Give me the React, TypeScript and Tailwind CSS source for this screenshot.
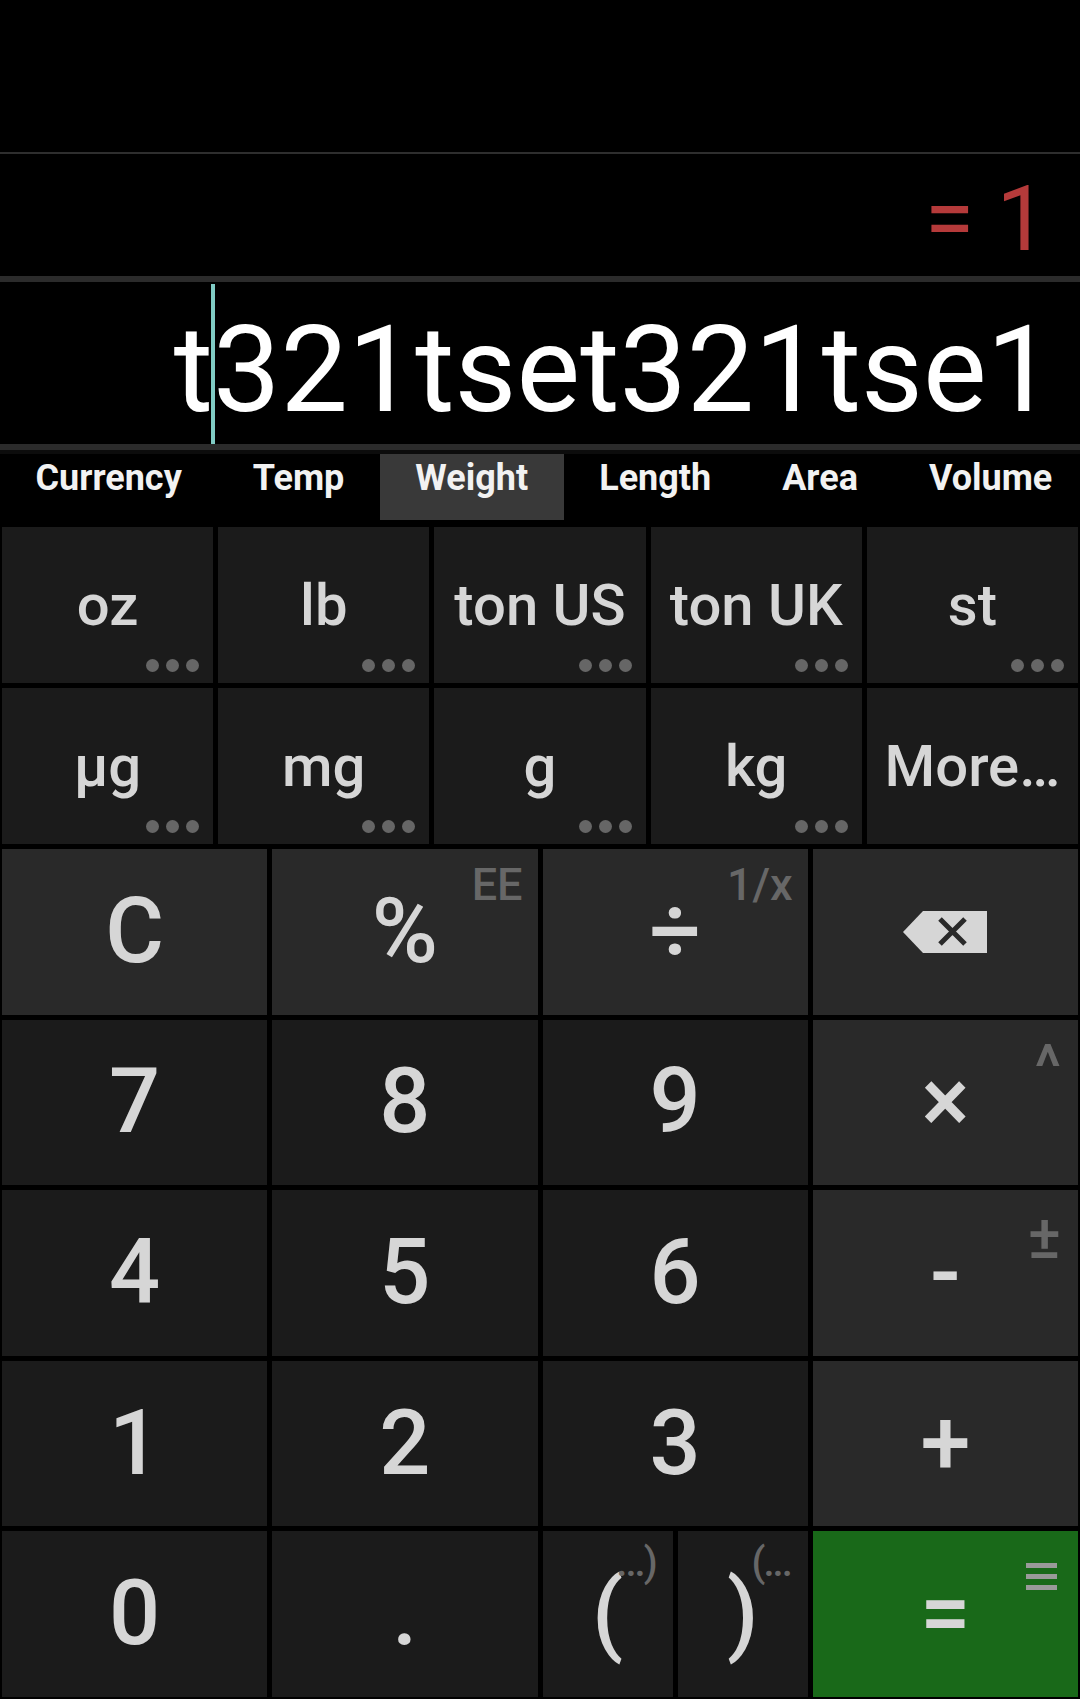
const tabs = ["Currency", "Temp", "Weight", "Length", "Area", "Volume"];

const unitRows = [
  [
    { label: "oz", more: true },
    { label: "lb", more: true },
    { label: "ton US", more: true },
    { label: "ton UK", more: true },
    { label: "st", more: true },
  ],
  [
    { label: "µg", more: true },
    { label: "mg", more: true },
    { label: "g", more: true },
    { label: "kg", more: true },
    { label: "More…", more: false },
  ],
];

function Dots() {
  return (
    <div className="absolute right-[14px] bottom-[11px] flex gap-[7px]">
      <span className="w-[13px] h-[13px] rounded-full bg-[#666666]" />
      <span className="w-[13px] h-[13px] rounded-full bg-[#666666]" />
      <span className="w-[13px] h-[13px] rounded-full bg-[#666666]" />
    </div>
  );
}

interface KeyProps {
  children: React.ReactNode;
  light?: boolean;
  hint?: React.ReactNode;
  hintClass?: string;
  className?: string;
}

function Key({ children, light, hint, hintClass, className }: KeyProps) {
  return (
    <div
      className={`relative flex items-center justify-center text-[90px] font-medium leading-none text-[#d6d6d6] ${
        light ? "bg-[#292929]" : "bg-[#1b1b1b]"
      } ${className ?? ""}`}
    >
      {children}
      {hint && (
        <span className={`absolute leading-none text-[#676767] ${hintClass ?? "top-[13px] right-[15px] text-[45px]"}`}>
          {hint}
        </span>
      )}
    </div>
  );
}

function BackspaceIcon() {
  return (
    <svg width="84" height="42" viewBox="0 0 84 42">
      <path d="M0 21 L20 0 H84 V42 H20 Z" fill="#d6d6d6" />
      <path d="M37 8 L62 33 M62 8 L37 33" stroke="#292929" strokeWidth="5" />
    </svg>
  );
}

function HistoryIcon() {
  return (
    <svg width="31" height="27" viewBox="0 0 31 27">
      <rect x="0" y="0" width="31" height="5" fill="#9a9a9a" />
      <rect x="0" y="11" width="31" height="5" fill="#9a9a9a" />
      <rect x="0" y="22" width="31" height="5" fill="#9a9a9a" />
    </svg>
  );
}

export default function App() {
  return (
    <div className="w-[1080px] h-[1699px] bg-black overflow-hidden font-[family-name:Roboto,sans-serif] flex flex-col">
      <div className="h-[152px] shrink-0" />
      <div className="h-[2px] shrink-0 bg-[#2e2e2e]" />

      {/* result */}
      <div className="h-[122px] shrink-0 flex justify-end items-start pt-[21px] pr-[33px]">
        <span className="text-[90px] leading-none text-[#b53a3a]">= 1</span>
      </div>
      <div className="h-[6px] shrink-0 bg-[#2b2b2b]" />

      {/* expression */}
      <div className="h-[162px] shrink-0 flex justify-end items-start pr-[26px] text-[120px] leading-none text-white">
        <span className="mt-[28px]">t</span>
        <div className="w-[4px] -mx-[2px] mt-[2px] h-[160px] bg-[#80cbc4] relative z-10" />
        <span className="mt-[28px]">321tset321tse1</span>
      </div>
      <div className="h-[6px] shrink-0 bg-[#2b2b2b]" />

      {/* unit tabs */}
      <div className="h-[70px] shrink-0 flex border-t-[4px] border-[#0c0c0c] whitespace-nowrap">
        {tabs.map((t) => (
          <div
            key={t}
            className={`px-[35.5px] pt-[6px] text-[36px] font-bold leading-none text-[#f2f2f2] ${
              t === "Weight" ? "bg-[#393939]" : ""
            }`}
          >
            {t}
          </div>
        ))}
      </div>

      {/* keys */}
      <div className="flex flex-col gap-[5px] px-[2px] pt-[7px]">
        {unitRows.map((row, i) => (
          <div key={i} className="grid grid-cols-5 gap-[5px] h-[156px]">
            {row.map((u) => (
              <div
                key={u.label}
                className="relative flex items-center justify-center bg-[#1b1b1b] text-[58px] font-medium leading-none text-[#d6d6d6] whitespace-nowrap"
              >
                {u.label}
                {u.more && <Dots />}
              </div>
            ))}
          </div>
        ))}

        <div className="grid grid-cols-4 gap-[5px] h-[165.6px]">
          <Key light>C</Key>
          <Key light hint="EE">%</Key>
          <Key light hint="1/x">÷</Key>
          <Key light>
            <BackspaceIcon />
          </Key>
        </div>

        <div className="grid grid-cols-4 gap-[5px] h-[165.6px]">
          <Key>7</Key>
          <Key>8</Key>
          <Key>9</Key>
          <Key light hint="^" hintClass="top-[16px] right-[17px] text-[62px]">×</Key>
        </div>

        <div className="grid grid-cols-4 gap-[5px] h-[165.6px]">
          <Key>4</Key>
          <Key>5</Key>
          <Key>6</Key>
          <Key light hint="±" hintClass="top-[16px] right-[17px] text-[62px]">-</Key>
        </div>

        <div className="grid grid-cols-4 gap-[5px] h-[165.6px]">
          <Key>1</Key>
          <Key>2</Key>
          <Key>3</Key>
          <Key light>+</Key>
        </div>

        <div className="grid grid-cols-4 gap-[5px] h-[165.6px]">
          <Key>0</Key>
          <Key>.</Key>
          <div className="grid grid-cols-2 gap-[5px]">
            <Key hint="...)" hintClass="top-[12px] right-[17px] text-[40px] tracking-[-2px]">(</Key>
            <Key hint="(..." hintClass="top-[12px] right-[17px] text-[40px] tracking-[-2px]">)</Key>
          </div>
          <Key className="!bg-[#196919]" hint={<HistoryIcon />} hintClass="top-[32px] right-[21px]">
            =
          </Key>
        </div>
      </div>
    </div>
  );
}
